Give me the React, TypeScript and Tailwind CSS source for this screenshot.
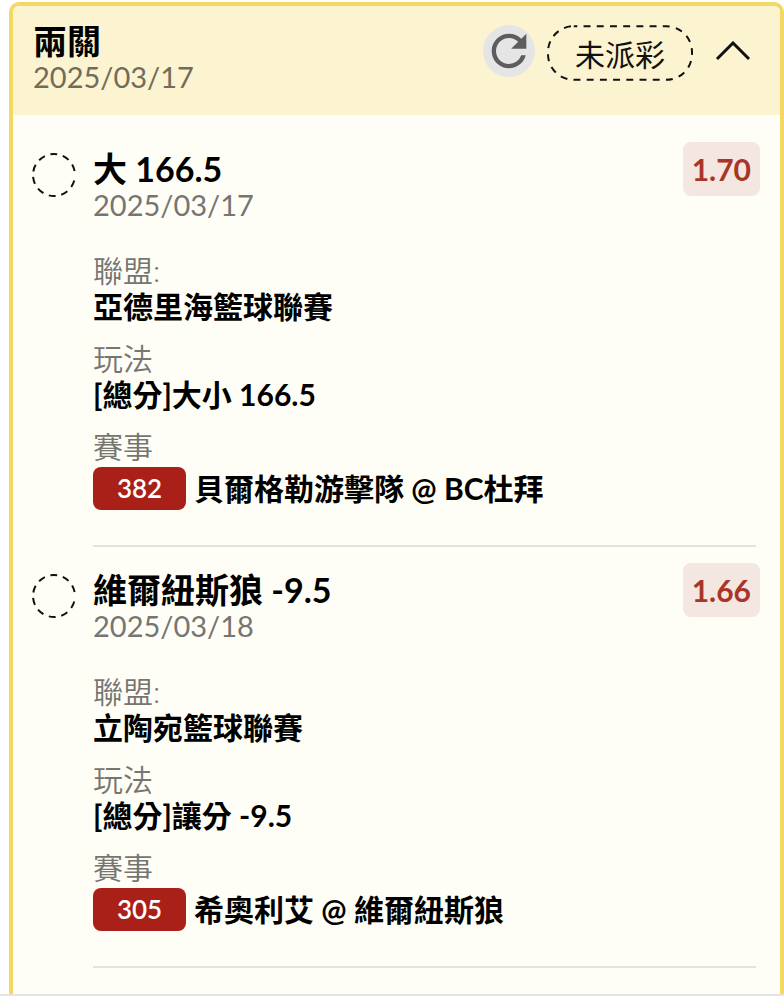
import React from "react";
import { MdRefresh } from "react-icons/md";

type Leg = {
  pick: string;
  date: string;
  odds: string;
  league: string;
  play: string;
  code: string;
  match: string;
};

const legs: Leg[] = [
  {
    pick: "大 166.5",
    date: "2025/03/17",
    odds: "1.70",
    league: "亞德里海籃球聯賽",
    play: "[總分]大小 166.5",
    code: "382",
    match: "貝爾格勒游擊隊 @ BC杜拜",
  },
  {
    pick: "維爾紐斯狼 -9.5",
    date: "2025/03/18",
    odds: "1.66",
    league: "立陶宛籃球聯賽",
    play: "[總分]讓分 -9.5",
    code: "305",
    match: "希奧利艾 @ 維爾紐斯狼",
  },
];

function PendingCircle() {
  return (
    <svg className="mt-[3px] size-11 shrink-0" viewBox="0 0 44 44" fill="none" aria-hidden="true">
      <circle cx="22" cy="22" r="21" stroke="#111" strokeWidth="2" strokeDasharray="7 5.7" strokeDashoffset="-5.7" />
    </svg>
  );
}

function StatusPill({ children }: { children: React.ReactNode }) {
  return (
    <span className="relative flex h-14 items-center px-7 pt-[2px] text-[30px] leading-9 text-[#111]">
      <svg className="absolute inset-0 size-full" viewBox="0 0 147 56" fill="none" aria-hidden="true">
        <rect x="1" y="1" width="145" height="54" rx="26" stroke="#111" strokeWidth="2" strokeDasharray="7 6.3" strokeDashoffset="3.5" />
      </svg>
      {children}
    </span>
  );
}

function LegItem({ leg }: { leg: Leg }) {
  return (
    <li className="flex gap-[17px] pt-6 pl-[19px] pr-5">
      <PendingCircle />
      <div className="min-w-0 grow">
        <div className="flex items-start justify-between">
          <div>
            <h3 className="text-[34px] leading-[37px] font-bold text-black">{leg.pick}</h3>
            <p className="text-[29px] leading-9 text-[#757571]">{leg.date}</p>
          </div>
          <span className="-mt-2 rounded-lg bg-[#f4e7e1] px-[9px] text-[30px] leading-[54px] font-bold text-[#a93528]">
            {leg.odds}
          </span>
        </div>
        <dl className="mr-1 flex flex-col gap-[15px] border-b-2 border-[#e3e3dd] pt-[29px] pb-[35px] text-[30px]">
          <div>
            <dt className="leading-9 font-[350] text-[#757571]">聯盟:</dt>
            <dd className="leading-[37px] font-bold text-black">{leg.league}</dd>
          </div>
          <div>
            <dt className="leading-9 font-[350] text-[#757571]">玩法</dt>
            <dd className="leading-[37px] font-bold text-black">{leg.play}</dd>
          </div>
          <div>
            <dt className="leading-9 font-[350] text-[#757571]">賽事</dt>
            <dd className="mt-[3px] flex items-center gap-2 leading-[43px] font-bold text-black">
              <span className="w-[93px] shrink-0 rounded-lg bg-[#a82017] text-center text-[26px] leading-[43px] font-semibold text-white">
                {leg.code}
              </span>
              <span>{leg.match}</span>
            </dd>
          </div>
        </dl>
      </div>
    </li>
  );
}

export default function App() {
  return (
    <main
      lang="zh-Hant"
      className="min-h-screen bg-white pt-[2px] font-[Lato,'Noto_Sans_CJK_TC',sans-serif]"
    >
      <div className="border-b-2 border-[#e4e4e4] pl-[9px]">
        <article className="overflow-hidden rounded-t-[10px] border-4 border-b-0 border-[#f1d964] bg-[#fffef6]">
          <header className="flex items-start bg-[#fcf3d1] pt-[17px] pr-[29px] pb-5 pl-5">
            <div className="grow">
              <h2 className="text-[34px] leading-9 font-bold text-black">兩關</h2>
              <p className="text-[29px] leading-9 text-[#716c5a]">2025/03/17</p>
            </div>
            <div className="flex items-center gap-3 pt-[2px]">
              <button
                type="button"
                aria-label="重新整理"
                className="-mt-1 flex size-[52px] items-center justify-center rounded-full bg-[#e5e5e5] text-[#5d5d5d]"
              >
                <MdRefresh className="size-[52px]" />
              </button>
              <StatusPill>未派彩</StatusPill>
              <button type="button" aria-label="收合" className="ml-[10px]">
                <svg className="h-6 w-9" viewBox="0 0 36 24" fill="none" aria-hidden="true">
                  <path d="M2 18 18 2l16 16" stroke="#111" strokeWidth="3" />
                </svg>
              </button>
            </div>
          </header>
          <ul className="pt-[11px] pb-[26px]">
            {legs.map((leg) => (
              <LegItem key={leg.code} leg={leg} />
            ))}
          </ul>
        </article>
      </div>
    </main>
  );
}
